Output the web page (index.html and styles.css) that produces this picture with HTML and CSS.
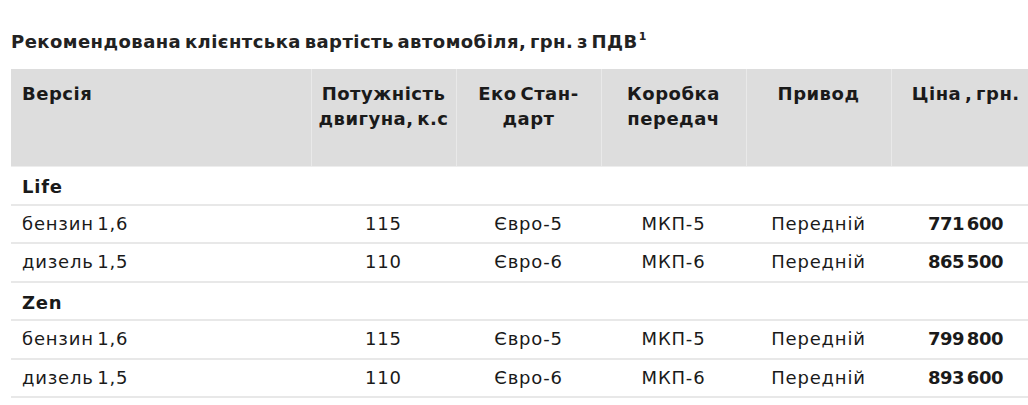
FILE: index.html
```html
<!DOCTYPE html>
<html lang="uk">
<head>
<meta charset="utf-8">
<title>Ціни</title>
<link rel="stylesheet" href="styles.css">
</head>
<body>
<div class="page">
  <h2 class="title">Рекомендована клієнтська вартість автомобіля, грн. з ПДВ<sup>1</sup></h2>
  <table class="prices">
    <colgroup>
      <col class="c-version">
      <col class="c-mid">
      <col class="c-mid">
      <col class="c-mid">
      <col class="c-mid">
      <col class="c-last">
    </colgroup>
    <thead>
      <tr>
        <th class="left">Версія</th>
        <th>Потужність двигуна, к.с</th>
        <th>Еко Стан-<br>дарт</th>
        <th>Коробка передач</th>
        <th>Привод</th>
        <th>Ціна , грн.</th>
      </tr>
    </thead>
    <tbody>
      <tr class="group"><td colspan="6">Life</td></tr>
      <tr><td class="left">бензин 1,6</td><td>115</td><td>Євро-5</td><td>МКП-5</td><td>Передній</td><td class="price">771 600</td></tr>
      <tr><td class="left">дизель 1,5</td><td>110</td><td>Євро-6</td><td>МКП-6</td><td>Передній</td><td class="price">865 500</td></tr>
      <tr class="group"><td colspan="6">Zen</td></tr>
      <tr><td class="left">бензин 1,6</td><td>115</td><td>Євро-5</td><td>МКП-5</td><td>Передній</td><td class="price">799 800</td></tr>
      <tr><td class="left">дизель 1,5</td><td>110</td><td>Євро-6</td><td>МКП-6</td><td>Передній</td><td class="price">893 600</td></tr>
    </tbody>
  </table>
</div>
</body>
</html>
```

FILE: styles.css
```css
html, body {
  margin: 0;
  padding: 0;
  overflow: hidden;
  background: #fff;
}
body {
  font-family: "DejaVu Sans", "Liberation Sans", sans-serif;
  color: #1a1a1a;
}
.page {
  padding: 30px 0 0 11px;
  width: 1029px;
}
.title {
  margin: 0 0 15px 0;
  font-size: 18px;
  line-height: 24px;
  font-weight: 700;
  letter-spacing: 0.45px;
  word-spacing: -3px;
  color: #222;
}
.title sup {
  font-size: 11px;
  line-height: 0;
  vertical-align: 8px;
  margin-left: 1px;
}
.prices {
  width: 1029px;
  table-layout: fixed;
  border-collapse: collapse;
  font-size: 18px;
  word-spacing: -3px;
  letter-spacing: 0.8px;
}
.c-version { width: 300px; }
.c-mid { width: 145px; }
.c-last { width: 149px; }
.prices th {
  background: #dddddd;
  font-weight: 700;
  text-align: center;
  vertical-align: top;
  height: 97px;
  box-sizing: border-box;
  padding: 12px 4px 0;
  line-height: 25px;
  border-left: 1px solid #e9e9e9;
  border-bottom: 1px solid #ededed;
  letter-spacing: 0.5px;
}
.prices th:first-child { border-left: none; }
.prices th.left { text-align: left; padding-left: 11px; }
.prices td {
  height: 38.5px;
  box-sizing: border-box;
  padding: 0 6px;
  text-align: center;
  vertical-align: middle;
  border-bottom: 2px solid #e8e8e8;
  line-height: 24px;
}
.prices td.left { text-align: left; padding-left: 11px; }
.prices td.price { font-weight: 700; letter-spacing: -0.5px; }
.prices tr.group td {
  text-align: left;
  font-weight: 700;
  padding-left: 11px;
  vertical-align: top;
  padding-top: 8px;
}
```
